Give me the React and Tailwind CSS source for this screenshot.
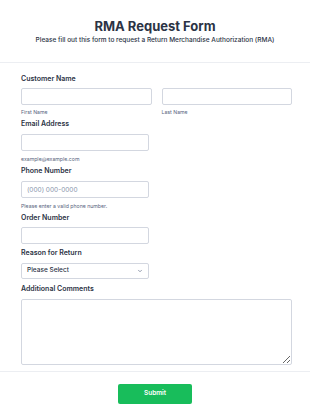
import { ChevronDown } from 'lucide-react';

const labelCls = 'block text-[7px] leading-[10px] font-semibold text-[#2c3345]';
const subCls = 'block text-[5.2px] leading-[8px] text-[#57647e]';
const inputCls =
  'block h-[17px] w-full rounded-[2px] border border-[#d3d7e0] bg-white px-[5px] text-[6.5px] text-[#2c3345] placeholder:text-[#8894ab] outline-none';

export default function App() {
  return (
    <div className="min-h-[419px] w-[310px] bg-white font-['Inter',sans-serif] text-[#2c3345]">
      {/* Encabezado */}
      <div className="border-b border-[#eceef2] pt-[18px] pb-[17px] text-center">
        <h1 className="text-[13px] leading-[16px] font-bold text-[#2c3345]">RMA Request Form</h1>
        <p className="mt-[2px] text-[6.5px] leading-[9px] font-medium text-[#2c3345]">
          Please fill out this form to request a Return Merchandise Authorization (RMA)
        </p>
      </div>

      {/* Campos */}
      <div className="pl-[21px] pr-[18px] pt-[11px]">
        <label className={labelCls}>Customer Name</label>
        <div className="mt-[4px] flex gap-[10px]">
          <div className="flex-1">
            <input className={inputCls} />
            <span className={`${subCls} mt-[3px]`}>First Name</span>
          </div>
          <div className="flex-1">
            <input className={inputCls} />
            <span className={`${subCls} mt-[3px]`}>Last Name</span>
          </div>
        </div>

        <label className={`${labelCls} mt-[3px]`}>Email Address</label>
        <div className="mt-[5px] w-[128px]">
          <input className={inputCls} />
        </div>
        <span className={`${subCls} mt-[4px]`}>example@example.com</span>

        <label className={`${labelCls} mt-[3px]`}>Phone Number</label>
        <div className="mt-[5px] w-[128px]">
          <input className={inputCls} placeholder="(000) 000-0000" />
        </div>
        <span className={`${subCls} mt-[4px]`}>Please enter a valid phone number.</span>

        <label className={`${labelCls} mt-[3px]`}>Order Number</label>
        <div className="mt-[4px] w-[128px]">
          <input className={`${inputCls} h-[16px]`} />
        </div>

        <label className={`${labelCls} mt-[4px]`}>Reason for Return</label>
        <div className="mt-[5px] flex h-[16px] w-[128px] items-center justify-between rounded-[2px] border border-[#d3d7e0] bg-white pl-[5px] pr-[5px]">
          <span className="text-[6.5px] font-medium text-[#2c3345]">Please Select</span>
          <ChevronDown className="h-[6px] w-[6px] text-[#57647e]" strokeWidth={2.5} />
        </div>

        <label className={`${labelCls} mt-[5px]`}>Additional Comments</label>
        <textarea className="mt-[5px] block h-[66px] w-full rounded-[2px] border border-[#d3d7e0] bg-white outline-none" />
      </div>

      {/* Pie */}
      <div className="mt-[6px] border-t border-[#eceef2] pt-[12px] pb-[16px] flex justify-center">
        <button className="h-[20px] w-[74px] rounded-[2px] bg-[#18bd5b] text-[6.5px] font-semibold text-white">
          Submit
        </button>
      </div>
    </div>
  );
}
